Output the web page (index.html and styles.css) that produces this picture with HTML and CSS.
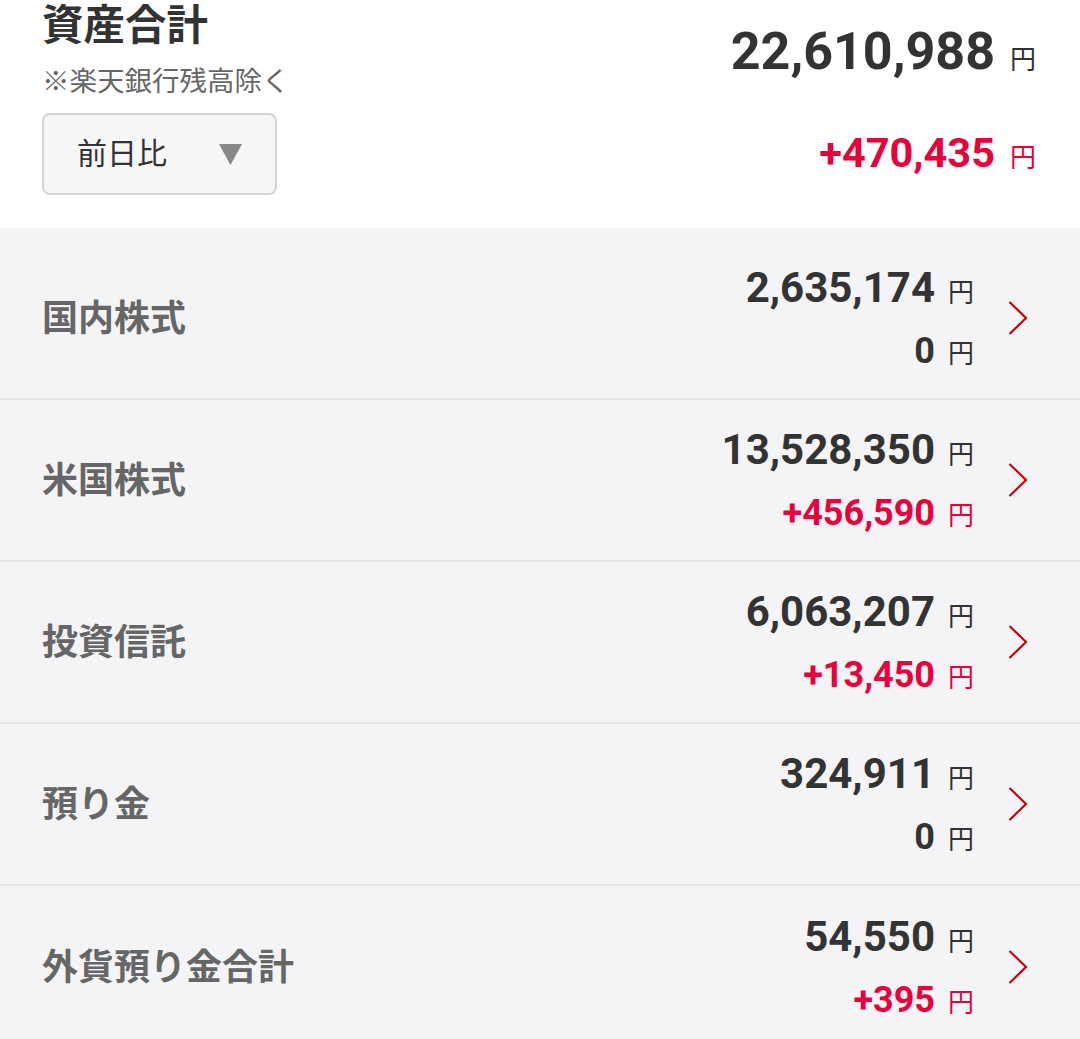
FILE: index.html
```html
<!DOCTYPE html>
<html lang="ja">
<head>
<meta charset="utf-8">
<link rel="stylesheet" href="styles.css">
</head>
<body>
<header class="summary">
  <div class="summary-left">
    <h1 class="title">資産合計</h1>
    <p class="note">※楽天銀行残高除く</p>
    <div class="select">
      <span class="select-label">前日比</span>
      <svg class="select-arrow" width="23" height="21" viewBox="0 0 23 21"><polygon points="0,0 23,0 11.5,21" fill="#888"/></svg>
    </div>
  </div>
  <div class="summary-right">
    <div class="total"><span class="num">22,610,988</span><span class="yen">円</span></div>
    <div class="total-diff plus"><span class="num">+470,435</span><span class="yen">円</span></div>
  </div>
</header>
<ul class="list">
  <li class="row">
    <span class="label">国内株式</span>
    <div class="amounts">
      <div class="amt"><span class="num">2,635,174</span><span class="yen">円</span></div>
      <div class="diff"><span class="num">0</span><span class="yen">円</span></div>
    </div>
    <svg class="chev" width="20" height="34" viewBox="0 0 20 34"><polyline points="1.5,1 18,17 1.5,33" fill="none" stroke="#c8000a" stroke-width="2.2"/></svg>
  </li>
  <li class="row">
    <span class="label">米国株式</span>
    <div class="amounts">
      <div class="amt"><span class="num">13,528,350</span><span class="yen">円</span></div>
      <div class="diff plus"><span class="num">+456,590</span><span class="yen">円</span></div>
    </div>
    <svg class="chev" width="20" height="34" viewBox="0 0 20 34"><polyline points="1.5,1 18,17 1.5,33" fill="none" stroke="#c8000a" stroke-width="2.2"/></svg>
  </li>
  <li class="row">
    <span class="label">投資信託</span>
    <div class="amounts">
      <div class="amt"><span class="num">6,063,207</span><span class="yen">円</span></div>
      <div class="diff plus"><span class="num">+13,450</span><span class="yen">円</span></div>
    </div>
    <svg class="chev" width="20" height="34" viewBox="0 0 20 34"><polyline points="1.5,1 18,17 1.5,33" fill="none" stroke="#c8000a" stroke-width="2.2"/></svg>
  </li>
  <li class="row">
    <span class="label">預り金</span>
    <div class="amounts">
      <div class="amt"><span class="num">324,911</span><span class="yen">円</span></div>
      <div class="diff"><span class="num">0</span><span class="yen">円</span></div>
    </div>
    <svg class="chev" width="20" height="34" viewBox="0 0 20 34"><polyline points="1.5,1 18,17 1.5,33" fill="none" stroke="#c8000a" stroke-width="2.2"/></svg>
  </li>
  <li class="row">
    <span class="label">外貨預り金合計</span>
    <div class="amounts">
      <div class="amt"><span class="num">54,550</span><span class="yen">円</span></div>
      <div class="diff plus"><span class="num">+395</span><span class="yen">円</span></div>
    </div>
    <svg class="chev" width="20" height="34" viewBox="0 0 20 34"><polyline points="1.5,1 18,17 1.5,33" fill="none" stroke="#c8000a" stroke-width="2.2"/></svg>
  </li>
</ul>
</body>
</html>
```
FILE: styles.css
```css
* { box-sizing: border-box; }
html, body {
  margin: 0;
  padding: 0;
  background: #f4f4f6;
  font-family: Roboto, "Noto Sans CJK JP", sans-serif;
  color: #333;
}
.summary {
  background: #fff;
  display: flex;
  justify-content: space-between;
  padding: 0 44px 33px 42px;
  height: 228px;
}
.summary-left {
  display: flex;
  flex-direction: column;
  align-items: flex-start;
}
.title {
  margin: 0;
  font-size: 41.5px;
  line-height: 52px;
  font-weight: 700;
  color: #333;
}
.note {
  margin: 12px 0 0;
  font-size: 27.5px;
  line-height: 36px;
  color: #666;
}
.select {
  margin-top: 13px;
  width: 235px;
  height: 82px;
  border: 2px solid #d4d4d4;
  border-radius: 8px;
  background: #f6f6f6;
  display: flex;
  align-items: center;
  justify-content: space-between;
  padding: 0 33px 0 33px;
}
.select-label {
  font-size: 30px;
  line-height: 40px;
  color: #333;
}
.select-arrow { display: block; }
.summary-right {
  display: flex;
  flex-direction: column;
  align-items: flex-end;
  padding-top: 20px;
}
.num { font-weight: 700; }
.yen {
  font-weight: 400;
  font-size: 26px;
  margin-left: 15px;
  font-family: "Noto Sans CJK JP", sans-serif;
}
.total {
  font-size: 52px;
  line-height: 64px;
  display: flex;
  align-items: baseline;
  white-space: nowrap;
}
.total-diff {
  margin-top: 33px;
  font-size: 41.5px;
  line-height: 60px;
  display: flex;
  align-items: baseline;
  white-space: nowrap;
}
.plus { color: #e8003c; }
.list {
  list-style: none;
  margin: 0;
  padding: 10px 0 0;
}
.row {
  height: 162px;
  border-bottom: 2px solid #e6e6e9;
  display: flex;
  align-items: center;
  padding: 0 52px 0 42px;
}
.row:last-child { border-bottom: none; }
.label {
  flex: 1;
  font-size: 36px;
  font-weight: 700;
  color: #666;
  font-family: "Noto Sans CJK JP", sans-serif;
  padding-bottom: 7px;
}
.amounts {
  display: flex;
  flex-direction: column;
  align-items: flex-end;
  padding-top: 4px;
}
.amt, .diff {
  display: flex;
  align-items: baseline;
  white-space: nowrap;
  line-height: 60px;
}
.amt { font-size: 42px; }
.diff { font-size: 36px; }
.amounts .yen { font-size: 26px; margin-left: 13px; }
.chev {
  display: block;
  margin-left: 34px;
}
```
